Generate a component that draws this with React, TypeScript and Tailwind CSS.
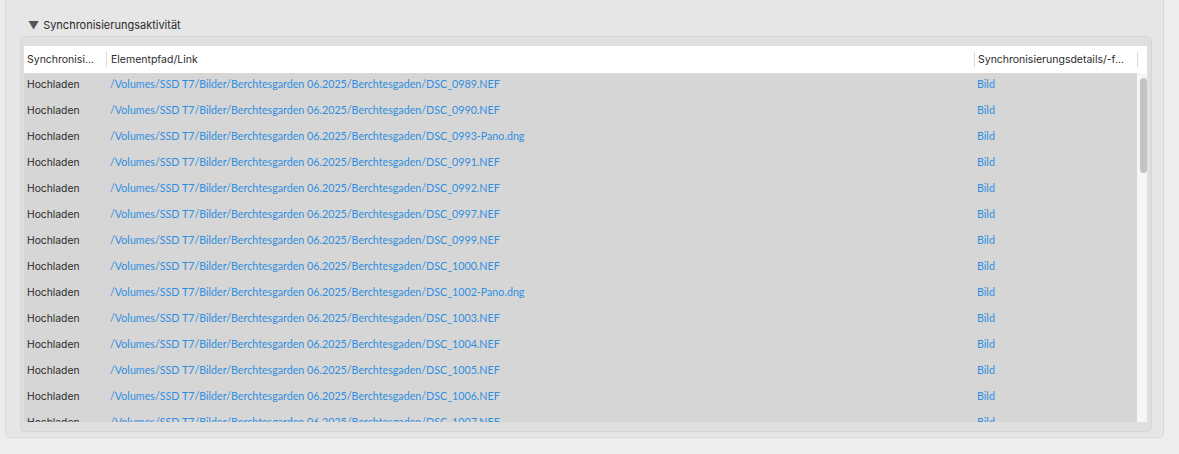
const files = [
  'DSC_0989.NEF',
  'DSC_0990.NEF',
  'DSC_0993-Pano.dng',
  'DSC_0991.NEF',
  'DSC_0992.NEF',
  'DSC_0997.NEF',
  'DSC_0999.NEF',
  'DSC_1000.NEF',
  'DSC_1002-Pano.dng',
  'DSC_1003.NEF',
  'DSC_1004.NEF',
  'DSC_1005.NEF',
  'DSC_1006.NEF',
  'DSC_1007.NEF',
];

const BASE = '/Volumes/SSD T7/Bilder/Berchtesgarden 06.2025/Berchtesgaden/';

export default function App() {
  return (
    <div className="h-[454px] w-[1179px] overflow-hidden bg-[#ededed] pl-[5px] font-['Inter','Noto_Sans',sans-serif]">
      {/* Outer panel */}
      <div className="w-[1159px] h-[438px] bg-[#e6e6e6] border-x border-b border-[#d9d9d9] rounded-b-[5px] pt-[16px] pl-[14px] pr-[11px] flex flex-col">
        {/* Section title */}
        <div className="h-[18px] flex items-center gap-[4px] pl-[8px] text-[11px] text-[#2b2b2b]">
          <span className="text-[11px] text-[#555] leading-none">▼</span>
          <span>Synchronisierungsaktivität</span>
        </div>

        {/* Inner box */}
        <div className="mt-[2px] h-[396px] bg-[#dfdfdf] border border-[#d6d6d6] rounded-[5px] pt-[9px] pl-[3px] pr-[4px] pb-[9px] flex flex-col">
          {/* Header */}
          <div className="h-[27px] bg-white flex items-center text-[10.5px] text-[#2b2b2b] shrink-0">
            <div className="w-[82px] pl-[3px] truncate">Synchronisi…</div>
            <div className="w-px h-[15px] bg-[#d9d9d9]" />
            <div className="w-[867px] pl-[4px]">Elementpfad/Link</div>
            <div className="w-px h-[15px] bg-[#d9d9d9]" />
            <div className="w-[162px] pl-[3px] whitespace-nowrap">Synchronisierungsdetails/-f…</div>
            <div className="w-px h-[15px] bg-[#d9d9d9]" />
          </div>

          {/* Body */}
          <div className="flex-1 flex overflow-hidden">
            <div className="flex-1 bg-[#d6d6d6] overflow-hidden">
              {files.map((f) => (
                <div key={f} className="h-[26px] pb-[3px] flex items-center">
                  <div className="w-[82px] pl-[3px] text-[10.3px] text-[#2b2b2b]">Hochladen</div>
                  <div className="w-[868px] pl-[4px] text-[10.7px] text-[#2e8ee0] font-['Lato',sans-serif] whitespace-nowrap">
                    {BASE + f}
                  </div>
                  <div className="pl-[3px] text-[10.7px] text-[#2e8ee0] font-['Lato',sans-serif]">Bild</div>
                </div>
              ))}
            </div>
            {/* Scrollbar */}
            <div className="w-[10px] bg-[#f6f6f6] pt-[5px] pl-[3px]">
              <div className="w-[7px] h-[95px] rounded-full bg-[#c3c3c3]" />
            </div>
          </div>
        </div>
      </div>
    </div>
  );
}
